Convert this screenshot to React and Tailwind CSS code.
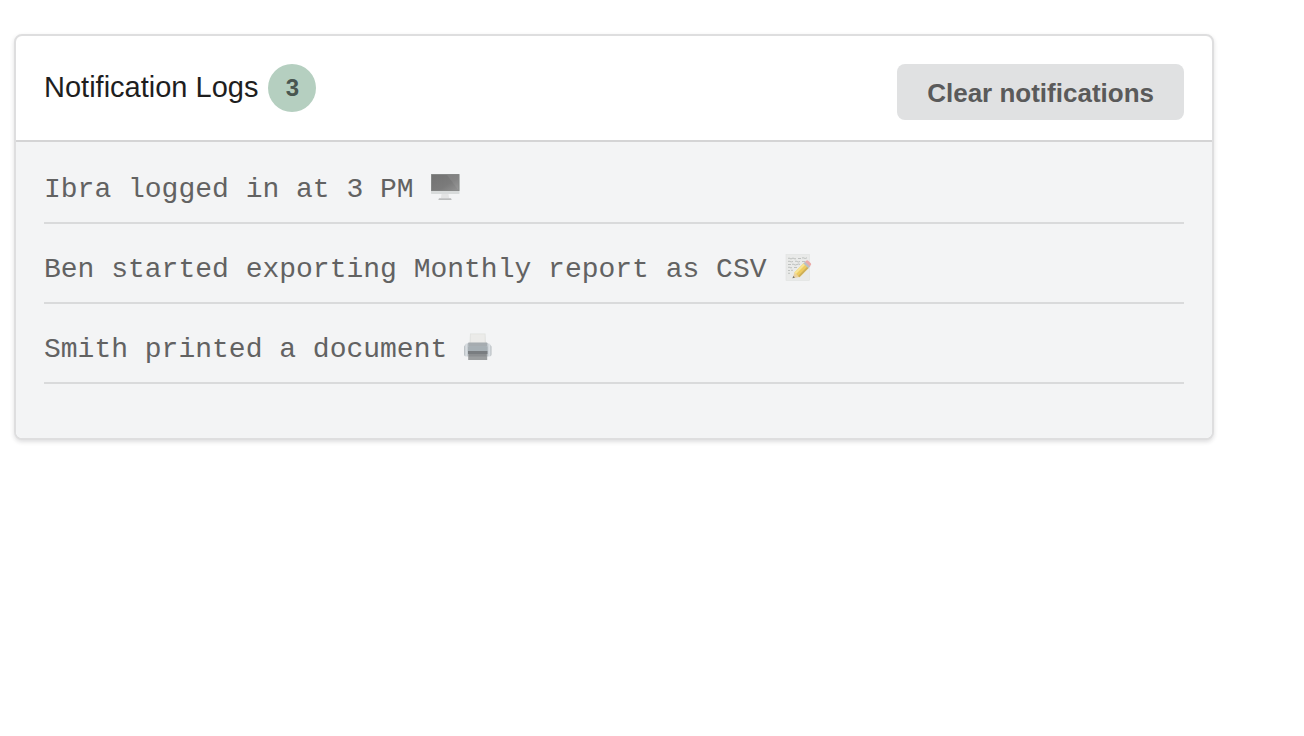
function ComputerIcon() {
  return (
    <svg viewBox="0 0 30 30" className="size-[30px] shrink-0" role="img" aria-label="Desktop computer">
      <defs>
        <linearGradient id="screen" x1="0" y1="0" x2="1" y2="1">
          <stop offset="0" stopColor="#727272" />
          <stop offset="0.6" stopColor="#7b7b7b" />
          <stop offset="1" stopColor="#929292" />
        </linearGradient>
      </defs>
      <rect x="1" y="2" width="28.5" height="20" rx="0.8" fill="#d8dbdb" />
      <rect x="1" y="2" width="28.5" height="17" rx="0.6" fill="#858786" />
      <rect x="2" y="3" width="26.5" height="15.5" fill="url(#screen)" />
      <path d="M17 3H28.5V18.5Z" fill="#fff" opacity="0.07" />
      <path d="M11.5 22h7l.6 4h-8.2z" fill="#e3e4e4" />
      <path d="M9 26.3h12l.7 1.7H8.3z" fill="#bbbdbd" />
    </svg>
  );
}

function MemoIcon() {
  return (
    <svg viewBox="0 0 30 30" className="size-[30px] shrink-0" role="img" aria-label="Memo">
      <rect x="3" y="2.5" width="23.5" height="26" fill="#e9eae9" stroke="#e0e2e0" strokeWidth="0.6" />
      <g fill="none" stroke="#b2b6b4" strokeWidth="0.8">
        <path d="M5 6.5q1-1 2 0t2 0 2 0 2 0M15 6.5h3M19 6.1q1-.8 2 0t3-.3" />
        <path d="M5 9.5q1-.8 2 0t3 0M12 9.5q1-1 2 0t3 0M19 9.5h3" />
        <path d="M5 12.5h3M9 12.5q1-1 2 0t3 0 3 0" />
        <path d="M5 15.5q1-1 2 0t2 0M11 15.5h3" />
        <path d="M5 18.5h2M8 18.5q1-.8 2 0M5 21.5q1-1 2 0" />
      </g>
      <path d="M9.5 26.3L11.5 20.5L16.8 25Z" fill="#ead1a1" />
      <path d="M9.5 26.3l.8-2.4 1.7 1.6z" fill="#707171" />
      <path d="M11.4 20.5L20.8 11L25.8 15.8L16.4 25.2Z" fill="#eecb60" />
      <path d="M11.4 20.5L20.8 11L22.5 12.6L13 22Z" fill="#f7e495" />
      <path d="M15.1 24L24.5 14.6L25.8 15.8L16.4 25.2Z" fill="#cdae58" />
      <path d="M20.4 11.4L22.3 9.5L27.3 14.3L25.4 16.2Z" fill="#b9c0c5" />
      <path d="M22 9.8L23.2 8.7q1-.8 2 0l2.6 2.5q.9.9 0 1.9L26.9 14.6Z" fill="#eaa9a7" />
    </svg>
  );
}

function PrinterIcon() {
  return (
    <svg viewBox="0 0 30 30" className="size-[30px] shrink-0" role="img" aria-label="Printer">
      <defs>
        <linearGradient id="printerBody" x1="0" y1="0" x2="1" y2="0">
          <stop offset="0" stopColor="#b4babe" />
          <stop offset="0.08" stopColor="#dde2e6" />
          <stop offset="0.2" stopColor="#a8b0b5" />
          <stop offset="0.8" stopColor="#a8b0b5" />
          <stop offset="0.92" stopColor="#dde2e6" />
          <stop offset="1" stopColor="#b4babe" />
        </linearGradient>
      </defs>
      <path d="M7 1.5h15.5l.5 10H6.5z" fill="#e0e1df" />
      <path d="M7.7 2.3h14v8.5h-14z" fill="#ebebe9" />
      <path d="M5.5 10.5h18.5l2 3.5H3.5z" fill="#a6acb0" />
      <path d="M3 11.5h2.5v2.5h18.5v-2.5h2.5l2 3v8q0 2-2 2H3q-2 0-2-2v-8z" fill="url(#printerBody)" />
      <rect x="5" y="14.5" width="19.5" height="4.5" fill="#a7b0b5" />
      <path d="M5 19h19.5v3H5z" fill="#797d80" />
      <path d="M5.2 22h19v6h-19z" fill="#9b9e9f" />
      <path d="M6 22h17.5v2.5H6z" fill="#8b8e90" />
    </svg>
  );
}

const logs = [
  { text: 'Ibra logged in at 3 PM', Icon: ComputerIcon },
  { text: 'Ben started exporting Monthly report as CSV', Icon: MemoIcon },
  { text: 'Smith printed a document', Icon: PrinterIcon },
];

export default function App() {
  return (
    <main className="min-h-screen bg-white pt-[34px] pr-4 pl-3.5 font-['Liberation_Sans',Arial,sans-serif]">
      <section className="max-w-[1200px] overflow-hidden rounded-lg border-2 border-[#dededf] bg-white shadow-[0_2px_4px_rgba(34,36,38,0.15)]">
        <header className="flex items-start justify-between border-b-2 border-[#d4d4d5] px-7 pt-7 pb-5">
          <div className="flex items-center gap-2.5">
            <h1 className="pb-0.5 text-[29px] leading-10 text-[#1e1e1e]">Notification Logs</h1>
            <span className="flex size-12 items-center justify-center rounded-full bg-[#b5cfc0] text-2xl font-bold text-[#495650]">
              3
            </span>
          </div>
          <button
            type="button"
            className="h-14 rounded-lg bg-[#e0e1e2] px-[30px] pt-0.5 text-[26px] leading-8 font-bold text-[#5a5a5a]"
          >
            Clear notifications
          </button>
        </header>
        <ul className="bg-[#f3f4f5] px-7 pt-0.5 pb-[54px] font-['Liberation_Mono','Courier_New',monospace] text-[28px] text-[#626262]">
          {logs.map(({ text, Icon }) => (
            <li key={text} className="flex h-20 items-center gap-4 border-b-2 border-[#d9dadb] pt-2">
              <span className="pt-1.5 leading-8">{text}</span>
              <Icon />
            </li>
          ))}
        </ul>
      </section>
    </main>
  );
}
